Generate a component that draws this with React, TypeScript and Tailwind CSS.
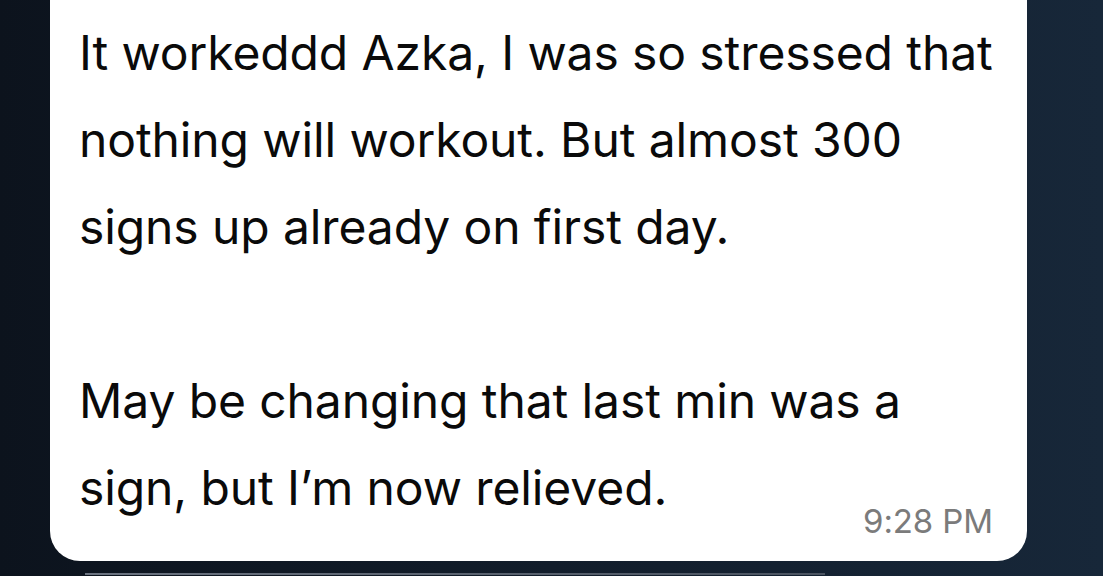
import React from 'react';

const lines = [
  'It workeddd Azka, I was so stressed that',
  'nothing will workout. But almost 300',
  'signs up already on first day.',
  '',
  'May be changing that last min was a',
];

const App: React.FC = () => {
  return (
    <div
      className="h-[576px] w-full overflow-hidden bg-gradient-to-r from-[#0c131d] via-[#121d2b] to-[#172739] flex flex-col"
      style={{ fontFamily: 'Inter, "Noto Sans", sans-serif' }}
    >
      <div className="ml-[50px] w-[977px] bg-white rounded-b-[30px] pl-[29px] pr-[34px] pt-[9px] pb-[30px] text-[#0a0a0a]">
        <div className="text-[48px] leading-[87px] tracking-[-0.1px]">
          {lines.map((l, i) => (
            <div key={i} className="h-[87px] whitespace-nowrap">
              {l}
            </div>
          ))}
          <div className="flex items-end justify-between">
            <span className="whitespace-nowrap">sign, but I’m now relieved.</span>
            <span className="text-[33px] leading-[40px] text-[#7b7b7b] mb-[-10px] whitespace-nowrap">9:28 PM</span>
          </div>
        </div>
      </div>
      <div className="ml-[85px] w-[740px] h-[2px] mt-[12px] bg-gradient-to-r from-[#6b7380] to-[#4a5360]" />
    </div>
  );
};

export default App;
